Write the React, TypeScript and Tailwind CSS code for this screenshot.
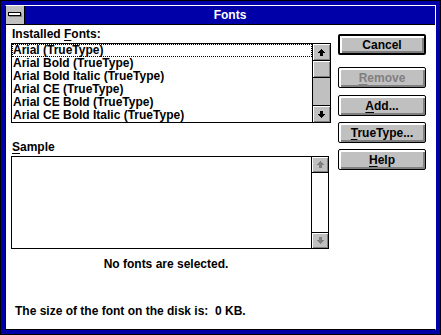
import React from "react";

const Arrow = ({ down = false, color = "#000" }: { down?: boolean; color?: string }) => (
  <svg width="7" height="7" viewBox="0 0 7 7" shapeRendering="crispEdges" style={{ transform: down ? "scaleY(-1)" : undefined }}>
    <rect x="3" y="0" width="1" height="1" fill={color} />
    <rect x="2" y="1" width="3" height="1" fill={color} />
    <rect x="1" y="2" width="5" height="1" fill={color} />
    <rect x="0" y="3" width="7" height="1" fill={color} />
    <rect x="2" y="4" width="3" height="3" fill={color} />
  </svg>
);

const bevel = "bg-[#c0c0c0] shadow-[inset_1px_1px_0_#fff,inset_-1px_-1px_0_#808080]";

const Btn = ({ children, def = false, cls = "" }: { children: React.ReactNode; def?: boolean; cls?: string }) => (
  <div
    className={
      "w-[88px] h-[21px] rounded-[2px] border-black bg-[#c0c0c0] flex items-center justify-center text-[12px] font-bold leading-none shadow-[inset_1px_1px_0_#fff,inset_2px_2px_0_#fff,inset_-1px_-1px_0_#808080,inset_-2px_-2px_0_#808080] " +
      (def ? "border-2 " : "border ") +
      cls
    }
  >
    {children}
  </div>
);

export default function App() {
  const fonts = [
    "Arial (TrueType)",
    "Arial Bold (TrueType)",
    "Arial Bold Italic (TrueType)",
    "Arial CE (TrueType)",
    "Arial CE Bold (TrueType)",
    "Arial CE Bold Italic (TrueType)",
  ];
  return (
    <div className="w-[441px] h-[335px] bg-black p-px font-['Liberation_Sans',Arial,sans-serif] text-black">
      <div className="w-full h-full bg-[#0000a8] p-[4px]">
        <div className="w-full h-full flex flex-col bg-white border-l border-l-black border-t border-t-white border-r border-r-white border-b border-b-black">
          {/* title bar */}
          <div className="h-[19px] flex border-b border-black shrink-0">
            <div className="w-[19px] h-full bg-[#c0c0c0] border-r border-black flex items-start justify-start">
              <div className="ml-[2px] mt-[6px] w-[13px] h-[4px] bg-white border border-black shadow-[1px_1px_0_#808080]" />
            </div>
            <div className="flex-1 bg-[#0000a8] flex items-center justify-center text-white text-[12px] font-bold leading-none">
              Fonts
            </div>
          </div>
          {/* body */}
          <div className="flex-1 flex">
            <div className="pl-[5px] flex flex-col">
              <div className="mt-[1px] h-[17px] text-[12px] font-bold leading-[16px] pl-[1px]">
                Installed <span className="underline underline-offset-[2px]">F</span>onts:
              </div>
              <div className="w-[320px] h-[80px] border border-black flex">
                <div className="flex-1 flex flex-col">
                  {fonts.map((f, i) => (
                    <div
                      key={f}
                      className={
                        "h-[13px] text-[12px] font-bold leading-[13px] whitespace-nowrap overflow-hidden pl-[1px] " +
                        (i === 0 ? "outline-dotted outline-1 outline-black -outline-offset-1" : "")
                      }
                    >
                      {f}
                    </div>
                  ))}
                </div>
                <div className="w-[18px] border-l border-black flex flex-col bg-[#c0c0c0]">
                  <div className={"h-[17px] border-b border-black flex items-center justify-center " + bevel}>
                    <Arrow />
                  </div>
                  <div className={"h-[17px] border-b border-black " + bevel} />
                  <div className="flex-1 bg-[#c0c0c0]" />
                  <div className={"h-[17px] border-t border-black flex items-center justify-center " + bevel}>
                    <Arrow down />
                  </div>
                </div>
              </div>
              <div className="mt-[16px] h-[17px] text-[12px] font-bold leading-[16px] pl-[1px]">
                <span className="underline underline-offset-[2px]">S</span>ample
              </div>
              <div className="w-[318px] h-[93px] border border-black flex">
                <div className="flex-1" />
                <div className="w-[17px] border-l border-black flex flex-col bg-white">
                  <div className={"h-[16px] border-b border-black flex items-center justify-center " + bevel}>
                    <Arrow color="#808080" />
                  </div>
                  <div className="flex-1 bg-white" />
                  <div className={"h-[16px] border-t border-black flex items-center justify-center " + bevel}>
                    <Arrow down color="#808080" />
                  </div>
                </div>
              </div>
              <div className="mt-[7px] h-[16px] w-[310px] text-center text-[12px] font-bold leading-[16px]">
                No fonts are selected.
              </div>
              <div className="mt-[31px] h-[16px] ml-[4px] text-[12px] font-bold leading-[16px] whitespace-pre">
                The size of the font on the disk is:  0 KB.
              </div>
            </div>
            <div className="ml-[7px] pt-[9px] flex flex-col">
              <Btn def>Cancel</Btn>
              <Btn cls="mt-[12px] text-[#808080]">
                <span>
                  <span className="underline underline-offset-[2px]">R</span>emove
                </span>
              </Btn>
              <Btn cls="mt-[7px]">
                <span>
                  <span className="underline underline-offset-[2px]">A</span>dd...
                </span>
              </Btn>
              <Btn cls="mt-[6px]">
                <span>
                  <span className="underline underline-offset-[2px]">T</span>rueType...
                </span>
              </Btn>
              <Btn cls="mt-[6px]">
                <span>
                  <span className="underline underline-offset-[2px]">H</span>elp
                </span>
              </Btn>
            </div>
          </div>
        </div>
      </div>
    </div>
  );
}
